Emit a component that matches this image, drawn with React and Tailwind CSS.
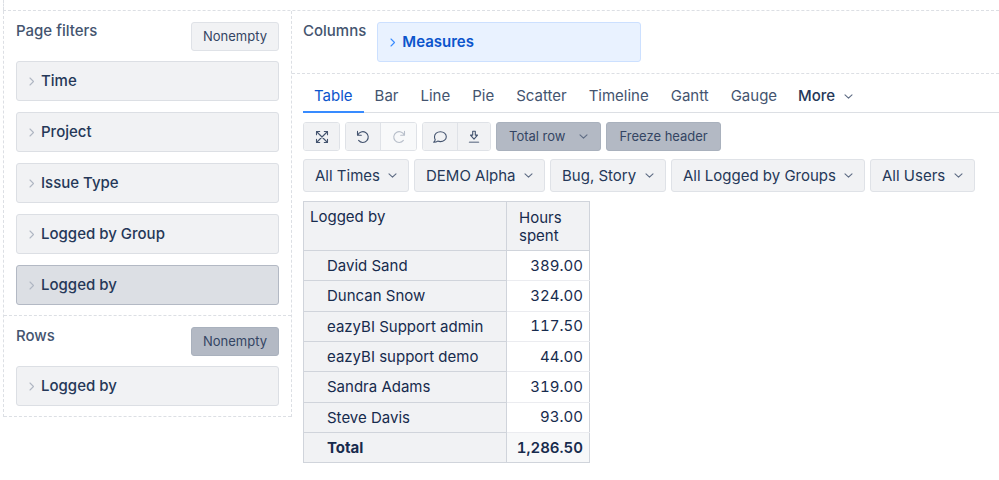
import React from "react";

const pageFilters = [
  { name: "Time" },
  { name: "Project" },
  { name: "Issue Type" },
  { name: "Logged by Group" },
  { name: "Logged by", selected: true },
];

const tabs = ["Table", "Bar", "Line", "Pie", "Scatter", "Timeline", "Gantt", "Gauge"];

const filters = [
  { label: "Time", value: "All Times" },
  { label: "Project", value: "DEMO Alpha" },
  { label: "Issue Type", value: "Bug, Story" },
  { label: "Logged by Group", value: "All Logged by Groups" },
  { label: "Logged by", value: "All Users" },
];

const rows = [
  ["David Sand", "389.00"],
  ["Duncan Snow", "324.00"],
  ["eazyBI Support admin", "117.50"],
  ["eazyBI support demo", "44.00"],
  ["Sandra Adams", "319.00"],
  ["Steve Davis", "93.00"],
];

function Icon({ children }) {
  return (
    <svg
      width="14"
      height="14"
      viewBox="0 0 14 14"
      fill="none"
      stroke="currentColor"
      strokeWidth="1.1"
      strokeLinecap="round"
      strokeLinejoin="round"
      aria-hidden="true"
    >
      {children}
    </svg>
  );
}

function ChevronDown({ className = "" }) {
  return (
    <svg width="9" height="9" viewBox="0 0 9 9" fill="none" stroke="currentColor" strokeWidth="1.1" strokeLinecap="round" strokeLinejoin="round" aria-hidden="true" className={`shrink-0 text-[#5e6c84] ${className}`}>
      <path d="M1 2.8 4.5 6.2 8 2.8" />
    </svg>
  );
}

function ChevronRight({ className = "" }) {
  return (
    <svg width="6" height="9" viewBox="0 0 6 9" fill="none" stroke="currentColor" strokeWidth="1.1" strokeLinecap="round" strokeLinejoin="round" aria-hidden="true" className={`shrink-0 ${className}`}>
      <path d="M1 1 4.5 4.5 1 8" />
    </svg>
  );
}

function Dimension({ name, selected }) {
  return (
    <button
      type="button"
      className={`flex h-10 w-full items-center gap-1.5 rounded-[3px] border px-3 pt-px text-left text-[15px] font-medium text-[#253858] ${
        selected ? "border-[#b3b9c4] bg-[#dcdfe4]" : "border-[#dcdfe4] bg-[#f1f2f4]"
      }`}
    >
      <ChevronRight className="text-[#b0b7c3]" />
      {name}
    </button>
  );
}

function Nonempty({ active }) {
  return (
    <button
      type="button"
      aria-pressed={!!active}
      className={`h-[29px] rounded-[3px] border px-[11px] text-[13px] text-[#344563] ${
        active ? "border-[#a9b1bd] bg-[#b3b9c4]" : "border-[#dfe2e7] bg-[#f1f2f4]"
      }`}
    >
      Nonempty
    </button>
  );
}

function Panel({ title, active, children }) {
  return (
    <section className="border-b border-dashed border-[#dcdfe4] px-3 pt-[11px] pb-[10px]">
      <div className="flex h-[39px] items-start justify-between">
        <h2 className="text-[15px] leading-[18px] font-medium text-[#44546f]">{title}</h2>
        <Nonempty active={active} />
      </div>
      <div className="flex flex-col gap-[11px]">{children}</div>
    </section>
  );
}

const toolButton = "flex h-[27px] w-[35px] items-center justify-center bg-[#f1f2f4] text-[#44546f]";
const toolGroup = "flex divide-x divide-[#dfe2e7] overflow-hidden rounded-[3px] border border-[#dfe2e7]";
const toggleButton =
  "flex h-[29px] items-center gap-[14px] rounded-[3px] border border-[#a9b1bd] bg-[#b3b9c4] px-3 text-[13px] text-[#344563]";

function Toolbar() {
  return (
    <div className="flex flex-wrap gap-[5px]">
      <div className={toolGroup}>
        <button type="button" aria-label="Full screen" className={toolButton}>
          <Icon>
            <path d="M1.5 4.7V1.5h3.2M9.3 1.5h3.2v3.2M12.5 9.3v3.2H9.3M4.7 12.5H1.5V9.3M1.5 1.5l11 11M12.5 1.5l-11 11" />
          </Icon>
        </button>
      </div>
      <div className={toolGroup}>
        <button type="button" aria-label="Undo" className={toolButton}>
          <Icon>
            <path d="M1.5 1.4v3.8h3.8M1.8 5.1A5.4 5.4 0 1 1 2.6 10.4" />
          </Icon>
        </button>
        <button type="button" aria-label="Redo" disabled className="flex h-[27px] w-[35px] items-center justify-center bg-[#f8f9fa] text-[#b8bfca]">
          <Icon>
            <path d="M12.5 1.4v3.8H8.7M12.2 5.1A5.4 5.4 0 1 0 11.4 10.4" />
          </Icon>
        </button>
      </div>
      <div className={toolGroup}>
        <button type="button" aria-label="Comments" className={toolButton}>
          <Icon>
            <path d="M7.4 1.8c3.3 0 5.9 2.1 5.9 4.9s-2.6 4.9-5.9 4.9c-1 0-1.9-.2-2.7-.5-.9.7-2.1 1.1-4 1.1 1-.8 1.4-1.7 1.5-2.6C1.7 8.8 1.5 7.8 1.5 6.7c0-2.8 2.6-4.9 5.9-4.9Z" />
          </Icon>
        </button>
        <button type="button" aria-label="Export" className="flex h-[27px] w-8 items-center justify-center bg-[#f1f2f4] text-[#44546f]">
          <Icon>
            <path d="M5.7 1.2h2.6v3.9h2.2L7 9.2 3.5 5.1h2.2Z" />
            <path d="M2.5 12.3h9" strokeWidth="1.5" stroke="#8590a2" />
          </Icon>
        </button>
      </div>
      <button type="button" aria-haspopup="menu" className={toggleButton}>
        Total row
        <ChevronDown />
      </button>
      <button type="button" aria-pressed="true" className={toggleButton}>
        Freeze header
      </button>
    </div>
  );
}

function FilterSelect({ label, value }) {
  return (
    <div className="grid rounded-[3px] border border-[#dfe2e7] bg-[#f1f2f4] text-[#253858]">
      <select aria-label={label} className="col-start-1 row-start-1 h-[31px] appearance-none bg-transparent pt-0.5 pr-7 pl-[11px] text-[15px]">
        <option>{value}</option>
      </select>
      <ChevronDown className="pointer-events-none col-start-1 row-start-1 mr-[11px] self-center justify-self-end" />
    </div>
  );
}

function ResultTable() {
  return (
    <table className="h-[262px] w-[287px] table-fixed border-collapse border border-[#d0d4db] text-[15px] leading-[18px] text-[#172b4d]">
      <colgroup>
        <col className="w-[203px]" />
        <col />
      </colgroup>
      <thead>
        <tr className="h-[49px] bg-[#f1f2f4] text-left align-top">
          <th scope="col" className="border border-[#d0d4db] px-1.5 pt-1.5 font-normal">Logged by</th>
          <th scope="col" className="border border-[#d0d4db] px-3 pt-[7px] font-normal">
            Hours
            <br />
            spent
          </th>
        </tr>
      </thead>
      <tbody>
        {rows.map(([name, hours]) => (
          <tr key={name} className="h-[30px]">
            <th scope="row" className="border border-[#d0d4db] bg-[#f1f2f4] pt-px pl-[23px] text-left font-normal">{name}</th>
            <td className="border-b border-[#ebecf0] pr-1.5 text-right tabular-nums">{hours}</td>
          </tr>
        ))}
      </tbody>
      <tfoot>
        <tr className="h-[30px] font-semibold">
          <th scope="row" className="border border-[#d0d4db] bg-[#f1f2f4] pt-px pl-[23px] text-left">Total</th>
          <td className="bg-[#f7f8f9] pr-1.5 text-right tabular-nums">1,286.50</td>
        </tr>
      </tfoot>
    </table>
  );
}

export default function App() {
  return (
    <div className="min-h-screen bg-white pl-[3px] font-['Inter',sans-serif]">
      <div className="h-[10px] border-l border-dashed border-[#dcdfe4]" />
      <div className="flex items-start border-t border-dashed border-[#dcdfe4]">
        <aside className="w-[289px] shrink-0 border-x border-dashed border-[#dcdfe4]">
          <Panel title="Page filters">
            {pageFilters.map((f) => (
              <Dimension key={f.name} {...f} />
            ))}
          </Panel>
          <Panel title="Rows" active>
            <Dimension name="Logged by" />
          </Panel>
        </aside>
        <main className="min-w-0 flex-1">
          <section className="flex gap-[11px] border-b border-dashed border-[#dcdfe4] py-[11px] pl-[11px]">
            <h2 className="text-[15px] leading-[18px] font-medium text-[#44546f]">Columns</h2>
            <button type="button" className="flex h-10 w-[264px] items-center gap-1.5 rounded-[3px] border border-[#cce0ff] bg-[#e9f2ff] px-3 pt-px text-[15px] font-semibold text-[#0c55cc]">
              <ChevronRight className="text-[#388bff]" />
              Measures
            </button>
          </section>
          <div className="pl-[11px]">
            <div role="tablist" className="flex h-[39px] border-b border-[#dcdfe4] text-[15px]">
              {tabs.map((t, i) => (
                <button
                  key={t}
                  type="button"
                  role="tab"
                  aria-selected={i === 0}
                  className={`-mb-px border-b-2 px-[11px] pt-2 ${
                    i === 0 ? "border-[#388bff] text-[#0c55cc]" : "border-transparent text-[#44546f]"
                  }`}
                >
                  {t}
                </button>
              ))}
              <button type="button" aria-haspopup="menu" className="-mb-px flex items-center gap-[9px] border-b-2 border-transparent px-[10px] pt-2 font-medium text-[#253858]">
                More
                <ChevronDown />
              </button>
            </div>
            <div className="py-[9px]">
              <Toolbar />
              <div className="mt-2 mb-[9px] flex flex-wrap gap-[5px]">
                {filters.map((f) => (
                  <FilterSelect key={f.label} {...f} />
                ))}
              </div>
              <ResultTable />
            </div>
          </div>
        </main>
      </div>
    </div>
  );
}
